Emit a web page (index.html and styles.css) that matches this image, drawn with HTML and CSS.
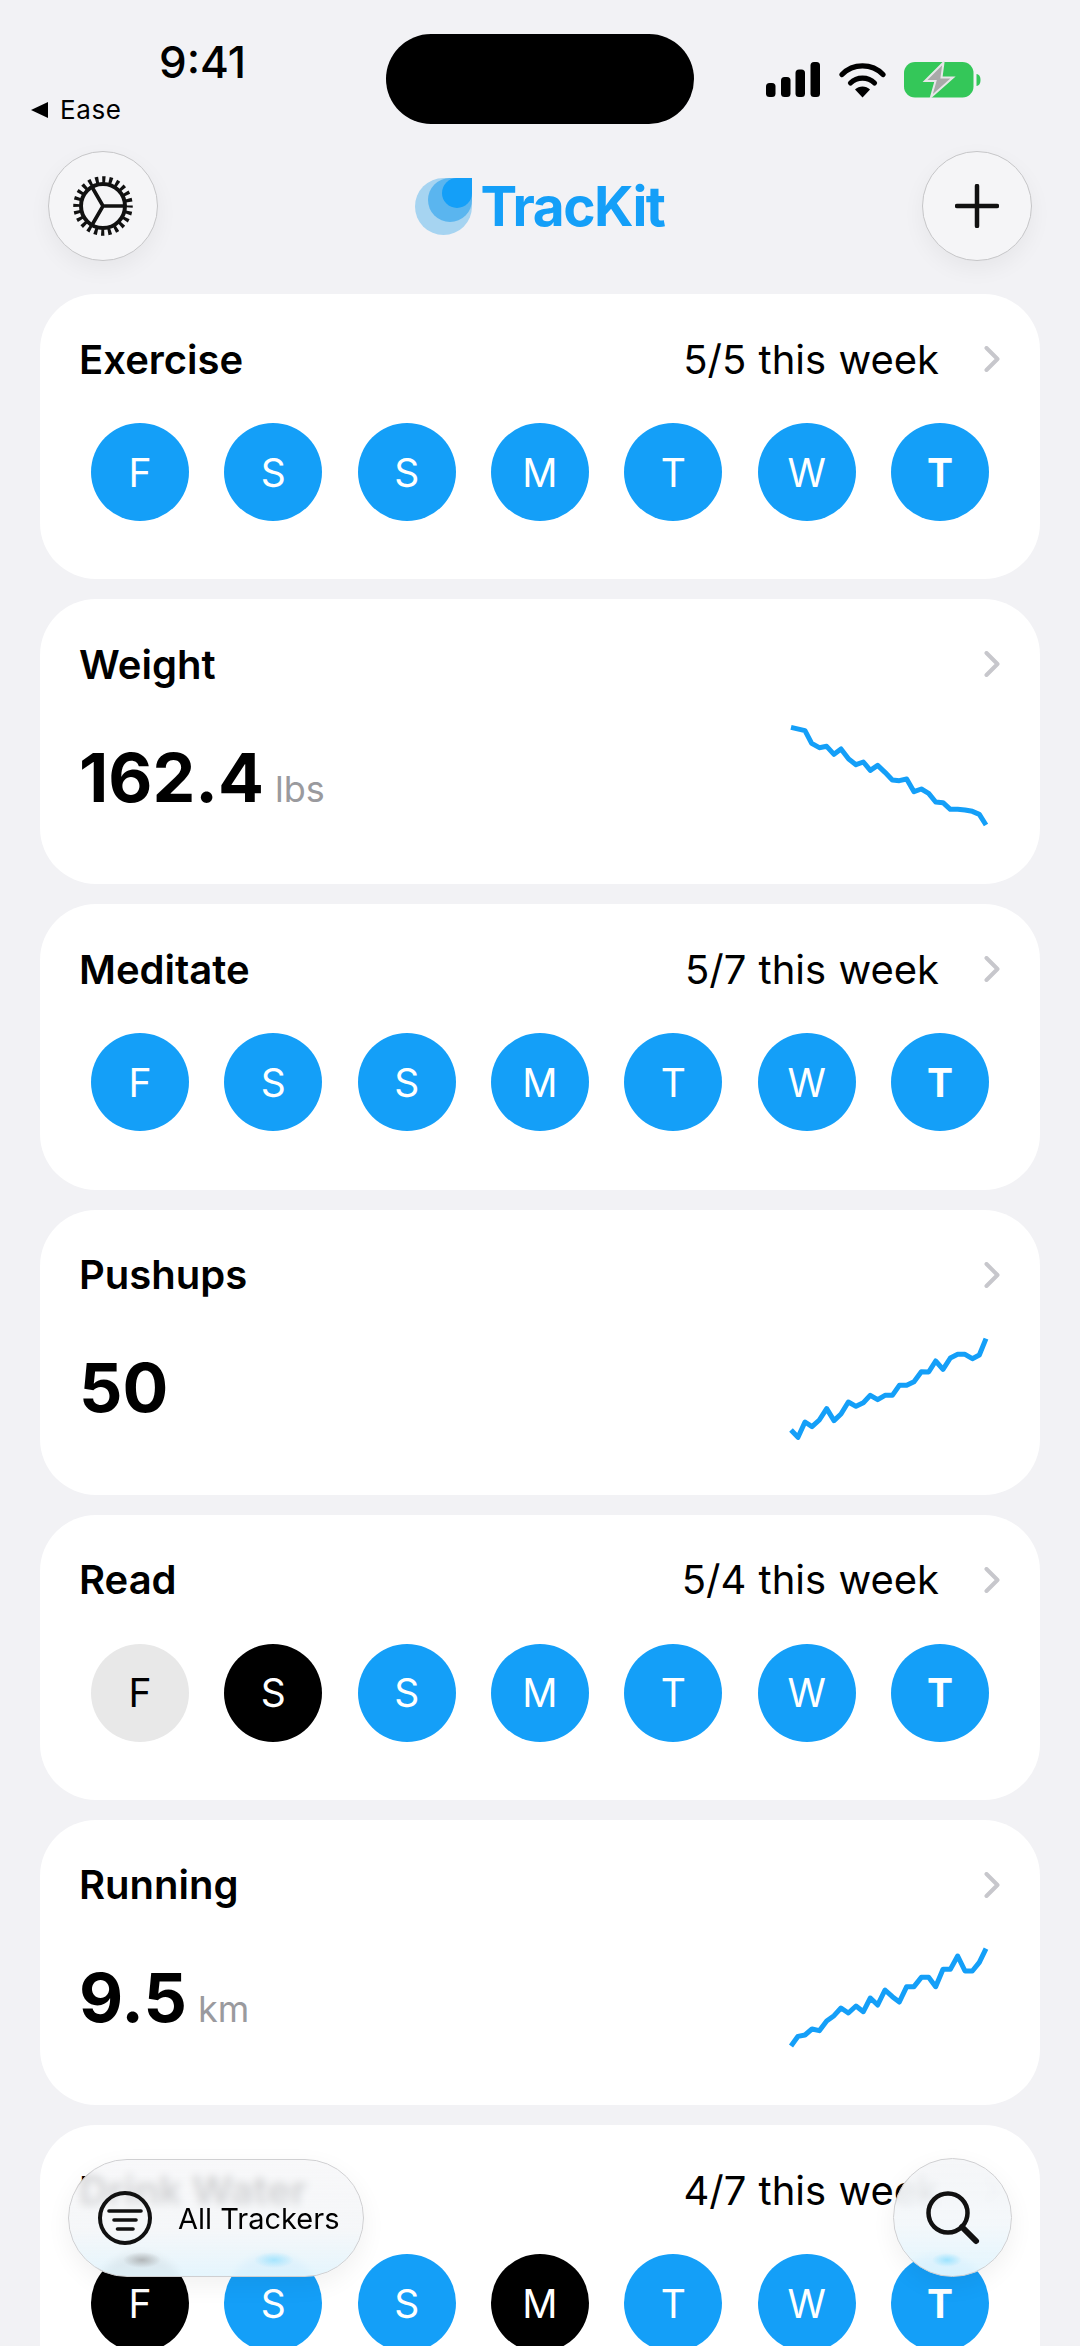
FILE: index.html
```html
<!DOCTYPE html>
<html lang="en">
<head>
    <meta charset="UTF-8">
    <title>TrackKit</title>
    <link rel="stylesheet" href="styles.css">
</head>
<body>
    <div class="status-bar">
        <div class="status-left">
            <div class="time">9:41</div>
            <div class="back-app"><span class="back-arrow"></span>Ease</div>
        </div>
        <div class="island"></div>
        <div class="status-icons">
            <svg width="54" height="35" viewBox="0 0 54 35">
                <rect x="0" y="21" width="9.5" height="14" rx="3.5"/>
                <rect x="15" y="15" width="9.5" height="20" rx="3.5"/>
                <rect x="29.5" y="7.5" width="9.5" height="27.5" rx="3.5"/>
                <rect x="44.5" y="0" width="9.5" height="35" rx="3.5"/>
            </svg>
            <svg class="wifi" width="47" height="36" viewBox="0 0 47 36">
                <path d="M3 12.5C14 1 33 1 44 12.5" fill="none" stroke="#000" stroke-width="5.2" stroke-linecap="round"/>
                <path d="M11.5 21C18 14.5 29 14.5 35.5 21" fill="none" stroke="#000" stroke-width="5.2" stroke-linecap="round"/>
                <path d="M23.5 35.5L16 27.5C20 23.5 27 23.5 31 27.5Z"/>
            </svg>
            <svg class="battery" width="77" height="37" viewBox="0 0 77 37">
                <rect x="0" y="1" width="69.500" height="35.500" rx="11" fill="#34c759"/>
                <path d="M72.500 13V25C75.500 24.500 76.500 22 76.500 19S75.500 13.500 72.500 13Z" fill="#34c759"/>
                <path d="M39.500 1.500L21 20H31.500L27 36L49 16.500H37.500Z" fill="#a9a9a9" stroke="#e6e6e8" stroke-width="2"/>
            </svg>
        </div>
    </div>

    <div class="top-bar">
        <div class="round-btn">
            <svg width="64" height="64" viewBox="0 0 64 64" fill="none" stroke="#111">
                <circle cx="32" cy="32" r="26.500" stroke-width="6.500" stroke-dasharray="3.200 3.739" stroke-dashoffset="1.600"/>
                <circle cx="32" cy="32" r="22" stroke-width="4"/>
                <path d="M32 32H54M32 32L21 13M32 32L21 51" stroke-width="3.600"/>
            </svg>
        </div>
        <div class="logo">
            <svg width="58" height="57" viewBox="0 0 58 57">
                <path d="M28.500 0H57V28.500A28.500 28.500 0 1 1 28.500 0Z" fill="#a6d4f1"/>
                <path d="M35 0H57V22A22 22 0 1 1 35 0Z" fill="#5ab5ef"/>
                <path d="M42 0H57V15A15 15 0 1 1 42 0Z" fill="#149ff8"/>
            </svg>
            <span class="logo-text">TracKit</span>
        </div>
        <div class="round-btn">
            <svg width="44" height="44" viewBox="0 0 44 44" fill="none" stroke="#111" stroke-width="4.500" stroke-linecap="round">
                <path d="M22 2V42M2 22H42"/>
            </svg>
        </div>
    </div>

    <div class="tracker-list">
        <div class="card">
            <div class="card-head">
                <span class="card-title">Exercise</span>
                <span class="card-count">5/5 this week</span>
                <svg class="chevron" width="16" height="26" viewBox="0 0 16 26"><path d="M2.500 2L13.500 13L2.500 24"/></svg>
            </div>
            <div class="days">
                <span class="day">F</span><span class="day">S</span><span class="day">S</span><span class="day">M</span><span class="day">T</span><span class="day">W</span><span class="day today">T</span>
            </div>
        </div>

        <div class="card">
            <div class="card-head">
                <span class="card-title">Weight</span>
                <svg class="chevron" width="16" height="26" viewBox="0 0 16 26"><path d="M2.500 2L13.500 13L2.500 24"/></svg>
            </div>
            <div class="metric">
                <div class="metric-value">162.4<span class="metric-unit">lbs</span></div>
                <svg class="spark" width="280" height="150" viewBox="0 0 840 450">
                    <polyline points="153,85 195,95 215,133 238,146 260,142 282,166 303,150 326,180 348,197 370,189 391,214 413,199 435,220 457,243 478,245 500,240 522,278 544,270 566,283 587,309 609,311 631,331 653,331 675,333 697,337 718,346 738,378"/>
                </svg>
            </div>
        </div>

        <div class="card">
            <div class="card-head">
                <span class="card-title">Meditate</span>
                <span class="card-count">5/7 this week</span>
                <svg class="chevron" width="16" height="26" viewBox="0 0 16 26"><path d="M2.500 2L13.500 13L2.500 24"/></svg>
            </div>
            <div class="days">
                <span class="day">F</span><span class="day">S</span><span class="day">S</span><span class="day">M</span><span class="day">T</span><span class="day">W</span><span class="day today">T</span>
            </div>
        </div>

        <div class="card">
            <div class="card-head">
                <span class="card-title">Pushups</span>
                <svg class="chevron" width="16" height="26" viewBox="0 0 16 26"><path d="M2.500 2L13.500 13L2.500 24"/></svg>
            </div>
            <div class="metric">
                <div class="metric-value">50</div>
                <svg class="spark" width="280" height="150" viewBox="0 0 840 450">
                    <polyline points="153,360 174,382 195,336 216,350 238,330 260,296 282,332 303,312 325,276 348,289 370,278 391,256 413,269 435,256 457,256 478,226 500,226 522,215 544,185 566,186 587,153 609,178 631,144 653,133 675,133 697,146 718,135 738,86"/>
                </svg>
            </div>
        </div>

        <div class="card">
            <div class="card-head">
                <span class="card-title">Read</span>
                <span class="card-count">5/4 this week</span>
                <svg class="chevron" width="16" height="26" viewBox="0 0 16 26"><path d="M2.500 2L13.500 13L2.500 24"/></svg>
            </div>
            <div class="days">
                <span class="day empty">F</span><span class="day skip">S</span><span class="day">S</span><span class="day">M</span><span class="day">T</span><span class="day">W</span><span class="day today">T</span>
            </div>
        </div>

        <div class="card">
            <div class="card-head">
                <span class="card-title">Running</span>
                <svg class="chevron" width="16" height="26" viewBox="0 0 16 26"><path d="M2.500 2L13.500 13L2.500 24"/></svg>
            </div>
            <div class="metric">
                <div class="metric-value">9.5<span class="metric-unit">km</span></div>
                <svg class="spark" width="280" height="150" viewBox="0 0 840 450">
                    <polyline points="153,378 174,349 195,345 216,327 238,332 260,303 282,287 303,264 325,279 348,258 370,275 391,234 413,255 435,210 457,230 478,246 500,200 522,200 544,172 566,172 587,200 609,148 631,148 653,108 675,153 697,153 718,127 738,86"/>
                </svg>
            </div>
        </div>

        <div class="card">
            <div class="card-head">
                <span class="card-title">Drink Water</span>
                <span class="card-count">4/7 this week</span>
                <svg class="chevron" width="16" height="26" viewBox="0 0 16 26"><path d="M2.500 2L13.500 13L2.500 24"/></svg>
            </div>
            <div class="days">
                <span class="day skip">F</span><span class="day">S</span><span class="day">S</span><span class="day skip">M</span><span class="day">T</span><span class="day">W</span><span class="day today">T</span>
            </div>
        </div>
    </div>

    <div class="filter-pill glass">
        <svg width="56" height="56" viewBox="0 0 56 56" fill="none" stroke="#111" stroke-linecap="round">
            <circle cx="28" cy="28" r="25" stroke-width="4"/>
            <path d="M12 21H44" stroke-width="3.600"/>
            <path d="M17 30H39" stroke-width="3.600"/>
            <path d="M20.500 39H36" stroke-width="3.600"/>
        </svg>
        <span>All Trackers</span>
    </div>
    <div class="search-btn glass">
        <svg width="60" height="60" viewBox="0 0 60 60" fill="none" stroke="#111" stroke-linecap="round">
            <circle cx="25" cy="25" r="19.500" stroke-width="4.500"/>
            <path d="M39 39L53 53" stroke-width="6"/>
        </svg>
    </div>
</body>
</html>
```

FILE: styles.css
```css
* {
    margin: 0;
    padding: 0;
    box-sizing: border-box;
}

body {
    width: 1080px;
    height: 2346px;
    background-color: #f2f2f5;
    color: #000;
    font-family: Inter, "Noto Sans", sans-serif;
    overflow: hidden;
    position: relative;
}

/* Status bar */
.status-bar {
    display: flex;
    align-items: flex-start;
    height: 151px;
    padding-top: 34px;
}

.status-left {
    width: 386px;
    padding-top: 3px;
}

.time {
    padding-left: 159px;
    font-size: 44px;
    font-weight: 500;
    line-height: 50px;
}

.back-app {
    display: flex;
    align-items: center;
    gap: 12px;
    padding-left: 31px;
    margin-top: 8px;
    font-size: 26px;
    line-height: 30px;
    letter-spacing: 0.6px;
}

.back-arrow {
    width: 0;
    height: 0;
    border-top: 8.500px solid transparent;
    border-bottom: 8.500px solid transparent;
    border-right: 17px solid #000;
}

.island {
    width: 308px;
    height: 90px;
    background: #000;
    border-radius: 45px;
}

.status-icons {
    display: flex;
    align-items: flex-start;
    margin-left: 72px;
    margin-top: 28px;
}

.wifi {
    margin-left: 19px;
}

.battery {
    margin-left: 18px;
    margin-top: -1px;
}

/* Top bar */
.top-bar {
    display: flex;
    align-items: center;
    justify-content: space-between;
    padding: 0 48px;
    height: 110px;
}

.round-btn {
    width: 110px;
    height: 110px;
    border-radius: 50%;
    border: 1.500px solid #c6c6c8;
    background: #f5f5f7;
    box-shadow: 0 8px 22px rgba(0, 0, 0, 0.05);
    display: flex;
    align-items: center;
    justify-content: center;
}

.logo {
    display: flex;
    align-items: center;
    gap: 7px;
}

.logo-text {
    color: #149ff8;
    font-size: 55px;
    font-weight: 700;
    letter-spacing: -1.500px;
    line-height: 60px;
}

/* Cards */
.tracker-list {
    display: flex;
    flex-direction: column;
    gap: 20px;
    padding: 33px 40px 0;
}

.card {
    flex: none;
    height: 285.200px;
    background: #fff;
    border-radius: 56px;
    padding: 39px 40px 0;
}

.card-head {
    display: flex;
    align-items: center;
    height: 52px;
}

.card-title {
    font-size: 40px;
    font-weight: 600;
    margin-left: -1px;
    margin-right: auto;
}

.card-count {
    font-size: 40px;
    word-spacing: 1px;
    margin-right: 45px;
}

.chevron {
    fill: none;
    stroke: #c7c7cc;
    stroke-width: 4;
    stroke-linecap: round;
    stroke-linejoin: round;
}

.days {
    display: flex;
    justify-content: space-between;
    margin: 38px 11px 0;
}

.day {
    width: 98px;
    height: 98px;
    border-radius: 50%;
    background: #149ff8;
    color: #fff;
    font-size: 39px;
    display: flex;
    align-items: center;
    justify-content: center;
}

.day.today {
    font-weight: 700;
}

.day.skip {
    background: #000;
}

.day.empty {
    background: #e8e8e8;
    color: #000;
}

.metric {
    display: flex;
    align-items: center;
    justify-content: space-between;
    margin: 9px -20px 0 -1px;
}

.metric-value {
    font-size: 68px;
    font-weight: 700;
    line-height: 80px;
    padding-top: 5px;
}

.metric-unit {
    font-size: 36px;
    font-weight: 400;
    line-height: 1;
    color: #9a9a9e;
    margin-left: 11px;
}

.spark polyline {
    fill: none;
    stroke: #149ff8;
    stroke-width: 15;
    stroke-linejoin: round;
}

/* Floating glass buttons */
.glass {
    position: absolute;
    border: 1.500px solid #cfcfd1;
    -webkit-backdrop-filter: blur(4px);
    backdrop-filter: blur(4px);
    box-shadow: 0 8px 24px rgba(0, 0, 0, 0.06);
}

.filter-pill {
    left: 68px;
    top: 2159px;
    width: 296px;
    height: 118px;
    border-radius: 59px;
    display: flex;
    align-items: center;
    gap: 25px;
    padding-left: 28px;
    font-size: 29px;
    background:
        radial-gradient(ellipse 19px 8px at 73px 100px, rgba(150, 150, 150, 0.6), transparent),
        radial-gradient(ellipse 20px 8px at 205px 100px, rgba(130, 220, 255, 0.6), transparent),
        linear-gradient(180deg, rgba(246, 246, 248, 0.8) 0%, rgba(244, 246, 248, 0.9) 60%, rgba(228, 245, 253, 0.97) 100%);
}

.search-btn {
    left: 893px;
    top: 2158px;
    width: 119px;
    height: 119px;
    border-radius: 50%;
    display: flex;
    align-items: center;
    justify-content: center;
    background:
        radial-gradient(ellipse 15px 7px at 53px 101px, rgba(130, 220, 255, 0.7), transparent),
        linear-gradient(180deg, rgba(244, 245, 247, 0.9) 0%, rgba(243, 247, 250, 0.93) 55%, rgba(225, 245, 254, 0.97) 100%);
}
```
